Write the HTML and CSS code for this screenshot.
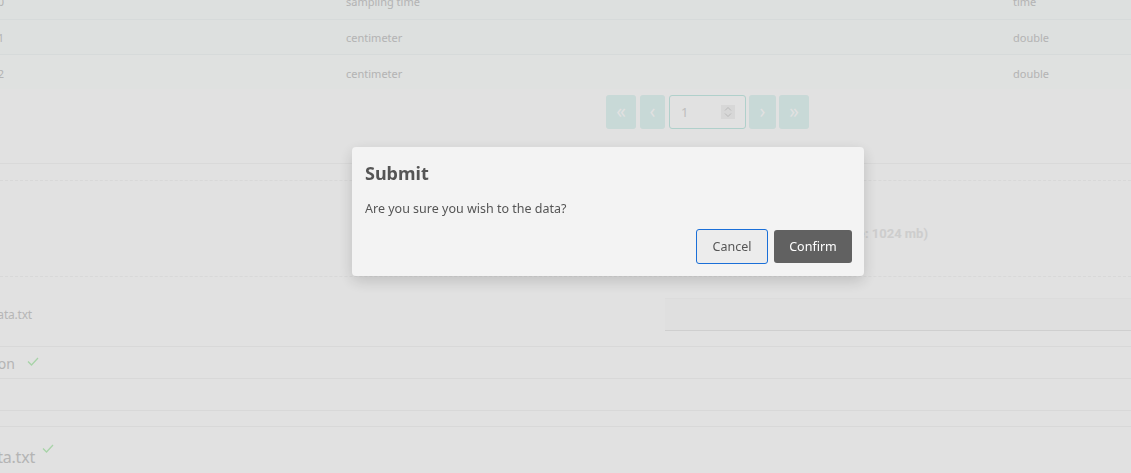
FILE: index.html
```html
<!DOCTYPE html>
<html lang="en">
<head>
<meta charset="utf-8">
<title>Submit data</title>
<link rel="stylesheet" href="styles.css">
</head>
<body>
<div class="page">
  <div class="table">
    <div class="row head">
      <div class="c1"><span>Field_0</span></div>
      <div class="c2">sampling time</div>
      <div class="c3">time</div>
    </div>
    <div class="row">
      <div class="c1"><span>field_1</span></div>
      <div class="c2">centimeter</div>
      <div class="c3">double</div>
    </div>
    <div class="row alt">
      <div class="c1"><span>field_2</span></div>
      <div class="c2">centimeter</div>
      <div class="c3">double</div>
    </div>
  </div>

  <div class="pager">
    <button class="pbtn w30">&laquo;</button>
    <button class="pbtn w25">&lsaquo;</button>
    <div class="pinput">
      <span class="pval">1</span>
      <span class="spin">
        <svg width="8" height="12" viewBox="0 0 8 12"><polyline points="1,4.5 4,1.5 7,4.5" fill="none" stroke="#d2d2d2" stroke-width="1"/><polyline points="1,7.5 4,10.5 7,7.5" fill="none" stroke="#d2d2d2" stroke-width="1"/></svg>
      </span>
    </div>
    <button class="pbtn w27">&rsaquo;</button>
    <button class="pbtn w30">&raquo;</button>
  </div>

  <section class="upload">
    <div class="upload-inner">
      <div class="limit">Upload a file (max size: 1024 mb)</div>
    </div>
  </section>

  <div class="file-row">
    <div class="clip w32"><span class="fname">data.txt</span></div>
    <div class="file-box"></div>
  </div>

  <ul class="status">
    <li class="s1">
      <div class="clip w15"><span class="sname">Validation</span></div>
      <svg class="check" width="12" height="9" viewBox="0 0 12 9"><polyline points="1,4.5 4.5,8 11,1" fill="none" stroke="#bff0bf" stroke-width="1.3"/></svg>
    </li>
    <li class="s2"></li>
    <li class="s3"></li>
    <li class="s4">
      <div class="clip w35"><span class="bname">data.txt</span></div>
      <svg class="check" width="12" height="9" viewBox="0 0 12 9"><polyline points="1,4.5 4.5,8 11,1" fill="none" stroke="#bff0bf" stroke-width="1.3"/></svg>
    </li>
  </ul>
</div>

<div class="overlay">
  <div class="dialog" role="dialog" aria-labelledby="dlg-title">
    <h2 id="dlg-title" class="dlg-title">Submit</h2>
    <p class="dlg-text">Are you sure you wish to the data?</p>
    <div class="dlg-actions">
      <button class="btn btn-cancel">Cancel</button>
      <button class="btn btn-confirm">Confirm</button>
    </div>
  </div>
</div>
</body>
</html>
```

FILE: styles.css
```css
* { box-sizing: border-box; }
html, body { margin: 0; padding: 0; }
body {
  width: 1131px;
  height: 473px;
  overflow: hidden;
  background: #ffffff;
  font-family: "Noto Sans", "Open Sans", sans-serif;
  color: #cccccc;
}
.page { margin-top: -15px; }

/* table */
.table { display: flex; flex-direction: column; }
.row {
  display: grid;
  grid-template-columns: 346px 667px 1fr;
  height: 35px;
  align-items: center;
  background: #fbfefd;
  border-bottom: 1px solid #f3f8f7;
  font-size: 11px;
}
.row.head { padding-bottom: 1px; }
.row.alt { background: #fdfffe; border-bottom: 0; height: 34px; padding-top: 2px; }
.c1 { display: flex; justify-content: flex-end; width: 4px; white-space: nowrap; }
.c2, .c3 { white-space: nowrap; }

/* pager */
.pager {
  display: flex;
  margin-top: 6px;
  padding-left: 606px;
  height: 34px;
}
.pbtn {
  height: 34px;
  border: 0;
  border-radius: 3px;
  background: #e3f6f4;
  color: #ffffff;
  font-family: "Noto Sans", sans-serif;
  font-size: 19px;
  line-height: 30px;
  padding: 0 0 3px;
  margin-right: 4px;
}
.w30 { width: 30px; }
.w25 { width: 25px; }
.w27 { width: 27px; margin-right: 3px; }
.pinput {
  width: 77px;
  height: 34px;
  border: 1px solid #c8ece6;
  border-radius: 3px;
  display: flex;
  align-items: center;
  justify-content: space-between;
  padding: 0 10px 0 11px;
  margin-right: 3px;
  font-size: 13px;
  color: #d8d8d8;
}
.spin {
  width: 14px;
  height: 14px;
  background: #f4f4f4;
  display: flex;
  align-items: center;
  justify-content: center;
}

/* upload section */
.upload {
  margin-top: 34px;
  border-top: 1px solid #f6f6f6;
  padding-top: 16px;
}
.upload-inner {
  border-top: 1px dashed #f5f5f5;
  border-bottom: 1px dashed #f5f5f5;
  height: 97px;
  display: flex;
  align-items: center;
  justify-content: flex-end;
  width: 1131px;
  padding-right: 203px;
  padding-top: 10px;
}
.limit {
  font-family: Roboto, "Noto Sans", sans-serif;
  font-weight: 700;
  font-size: 13px;
  color: #e9e9e9;
  white-space: nowrap;
}

/* file row */
.file-row {
  display: grid;
  grid-template-columns: 665px 1fr;
  margin-top: 21px;
  height: 33px;
  align-items: center;
}
.clip { display: flex; justify-content: flex-end; white-space: nowrap; }
.w32 { width: 32px; }
.w15 { width: 15px; }
.w35 { width: 35px; }
.fname { font-size: 12px; letter-spacing: -0.2px; color: #cfcfcf; }
.file-box {
  height: 33px;
  background: #fdfdfd;
  border-bottom: 1px solid #ebebeb;
  border-top: 1px solid #fafafa;
}

/* status list */
.status { list-style: none; margin: 15px 0 0; padding: 0; }
.status li { border-top: 1px solid #f5f5f5; display: flex; }
.s1 { height: 32px; align-items: center; padding-top: 2px; }
.s2 { height: 32px; }
.s3 { height: 16px; }
.s4 { height: 60px; align-items: center; }
.sname { font-size: 14px; color: #cdcdcd; }
.bname { font-size: 16px; letter-spacing: -0.2px; color: #cdcdcd; }
.s1 .check { margin-left: 12px; margin-top: -5px; }
.s4 .check { margin-left: 7px; margin-top: -16px; }

/* overlay + dialog */
.overlay {
  position: fixed;
  inset: 0;
  background: rgba(0, 0, 0, 0.118);
}
.dialog {
  position: absolute;
  left: 352px;
  top: 147px;
  width: 512px;
  height: 129px;
  background: #f3f3f3;
  border-radius: 4px;
  box-shadow: 0 5px 15px rgba(0, 0, 0, 0.16);
  padding: 13px 12px 12px 13px;
  display: flex;
  flex-direction: column;
  font-family: "Noto Sans", "Open Sans", sans-serif;
}
.dlg-title {
  margin: 0;
  font-size: 18px;
  font-weight: 700;
  line-height: 26px;
  color: #555555;
}
.dlg-text {
  margin: 14px 0 0;
  font-size: 12.5px;
  line-height: 18px;
  color: #555555;
}
.dlg-actions {
  margin-top: auto;
  display: flex;
  justify-content: flex-end;
  align-items: center;
  gap: 6px;
}
.btn {
  font-family: "Noto Sans", "Open Sans", sans-serif;
  font-size: 12.5px;
  border-radius: 3px;
  padding: 0;
}
.btn-cancel {
  width: 72px;
  height: 35px;
  background: #ececec;
  color: #555555;
  border: 1px solid #1a6fd8;
}
.btn-confirm {
  width: 78px;
  height: 33px;
  background: #616161;
  color: #ffffff;
  border: 0;
}
```
